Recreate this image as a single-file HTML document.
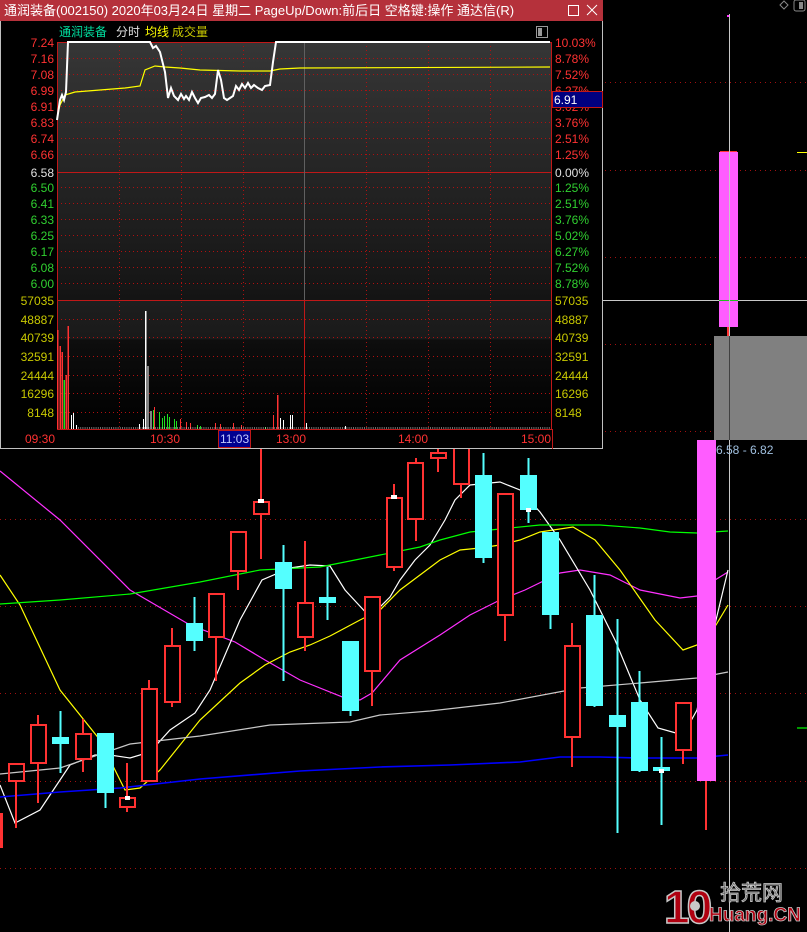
<!DOCTYPE html>
<html><head><meta charset="utf-8"><style>
html,body{margin:0;padding:0;background:#000;width:807px;height:932px;overflow:hidden}
svg{display:block}
text{font-family:"Liberation Sans","Noto Sans CJK SC",sans-serif}
</style></head><body>
<svg width="807" height="932" viewBox="0 0 807 932" xmlns="http://www.w3.org/2000/svg">
<rect width="807" height="932" fill="#000"/>
<g stroke="#a01010" stroke-width="1" stroke-dasharray="1,4">
<line x1="0" y1="82.5" x2="807" y2="82.5"/><line x1="0" y1="170.5" x2="807" y2="170.5"/>
<line x1="0" y1="257.5" x2="807" y2="257.5"/><line x1="0" y1="344.5" x2="807" y2="344.5"/>
<line x1="0" y1="431.5" x2="807" y2="431.5"/><line x1="0" y1="519.5" x2="807" y2="519.5"/>
<line x1="0" y1="606.5" x2="807" y2="606.5"/><line x1="0" y1="693.5" x2="807" y2="693.5"/>
<line x1="0" y1="781.5" x2="807" y2="781.5"/><line x1="0" y1="868.5" x2="807" y2="868.5"/>
</g>
<g fill="none" stroke-width="1.2">
<polyline stroke="#ff30ff" points="0,471 60,520 130,590 190,625 235,642 265,660 300,680 345,698 360,700 372,693 400,660 440,635 470,615 500,600 525,590 560,573 580,570 610,575 640,590 680,598 697,596 715,580 728,572"/>
<polyline stroke="#ffff00" points="0,575 20,605 60,690 100,740 125,790 140,788 160,770 200,720 240,683 265,665 290,652 310,645 330,636 360,620 380,610 400,590 420,575 440,560 460,550 480,548 500,545 520,540 540,532 573,527 595,540 620,570 655,620 683,650 697,645 716,625 728,605"/>
<polyline stroke="#ffffff" points="0,785 15,823 40,810 70,765 95,755 110,755 130,758 150,752 170,730 195,713 210,690 240,620 262,580 290,568 310,565 330,566 345,590 370,617 390,597 400,580 415,560 430,545 445,520 455,500 470,485 500,482 520,490 540,512 560,540 590,590 615,640 640,700 658,728 683,735 697,710 716,620 728,570"/>
<polyline stroke="#00ff00" points="0,604 60,600 130,594 200,582 260,570 320,567 380,555 420,547 440,540 470,532 540,525 600,525 640,528 670,532 697,533 728,531"/>
<polyline stroke="#c8c8c8" points="0,774 60,768 130,744 200,736 270,725 350,722 380,715 430,711 500,703 580,688 640,683 697,678 728,672"/>
<polyline stroke="#0000ff" stroke-width="1.6" points="0,797 60,792 120,788 200,779 300,771 380,767 450,765 520,762 560,757 600,757 640,758 697,758 728,755"/>
<line x1="797" y1="728" x2="807" y2="728" stroke="#00ff00"/>
</g>
<g stroke="#ff3232" stroke-width="2" fill="none">
<rect x="0" y="813" width="3" height="35" fill="#ff3232" stroke="none"/>
<line x1="16" y1="781" x2="16" y2="828"/><rect x="9" y="764" width="15" height="17"/>
<line x1="38" y1="715" x2="38" y2="803"/><rect x="31" y="725" width="15" height="38" fill="#000"/>
<line x1="83" y1="719" x2="83" y2="772"/><rect x="76" y="734" width="15" height="25" fill="#000"/>
<line x1="127" y1="763" x2="127" y2="812"/><rect x="120" y="798" width="15" height="9" fill="#000"/>
<line x1="149" y1="680" x2="149" y2="689"/><rect x="142" y="689" width="15" height="92" fill="#000"/>
<line x1="172" y1="628" x2="172" y2="707"/><rect x="165" y="646" width="15" height="56" fill="#000"/>
<line x1="216" y1="637" x2="216" y2="681"/><rect x="209" y="594" width="15" height="43" fill="#000"/>
<line x1="238" y1="571" x2="238" y2="590"/><rect x="231" y="532" width="15" height="39" fill="#000"/>
<line x1="261" y1="449" x2="261" y2="559"/><rect x="254" y="502" width="15" height="12" fill="#000"/>
<line x1="305" y1="541" x2="305" y2="651"/><rect x="298" y="603" width="15" height="34" fill="#000"/>
<line x1="372" y1="671" x2="372" y2="706"/><rect x="365" y="597" width="15" height="74" fill="#000"/>
<line x1="394" y1="484" x2="394" y2="571"/><rect x="387" y="498" width="15" height="69" fill="#000"/>
<line x1="416" y1="458" x2="416" y2="541"/><rect x="408" y="463" width="15" height="56" fill="#000"/>
<line x1="438" y1="448" x2="438" y2="472"/><rect x="431" y="453" width="15" height="5" fill="#000"/>
<line x1="461" y1="484" x2="461" y2="498"/><rect x="454" y="440" width="15" height="44" fill="#000"/>
<line x1="505" y1="615" x2="505" y2="641"/><rect x="498" y="494" width="15" height="121" fill="#000"/>
<line x1="572" y1="623" x2="572" y2="767"/><rect x="565" y="646" width="15" height="91" fill="#000"/>
<line x1="683" y1="750" x2="683" y2="764"/><rect x="676" y="703" width="15" height="47" fill="#000"/>
<line x1="706" y1="781" x2="706" y2="830"/>
</g>
<g fill="#54ffff">
<rect x="59.5" y="711" width="2" height="62"/><rect x="52" y="737" width="17" height="7"/>
<rect x="104.5" y="733" width="2" height="75"/><rect x="97" y="733" width="17" height="60"/>
<rect x="193.5" y="597" width="2" height="54"/><rect x="186" y="623" width="17" height="18"/>
<rect x="282.5" y="545" width="2" height="136"/><rect x="275" y="562" width="17" height="27"/>
<rect x="326.5" y="567" width="2" height="53"/><rect x="319" y="597" width="17" height="6"/>
<rect x="349.5" y="641" width="2" height="75"/><rect x="342" y="641" width="17" height="70"/>
<rect x="482.5" y="453" width="2" height="110"/><rect x="475" y="475" width="17" height="83"/>
<rect x="527.5" y="458" width="2" height="65"/><rect x="520" y="475" width="17" height="35"/>
<rect x="549.5" y="532" width="2" height="97"/><rect x="542" y="532" width="17" height="83"/>
<rect x="593.5" y="575" width="2" height="132"/><rect x="586" y="615" width="17" height="91"/>
<rect x="616.5" y="619" width="2" height="214"/><rect x="609" y="715" width="17" height="12"/>
<rect x="638.5" y="671" width="2" height="101"/><rect x="631" y="702" width="17" height="69"/>
<rect x="660.5" y="737" width="2" height="88"/><rect x="653" y="767" width="17" height="4"/>
</g>
<g fill="#fff">
<rect x="125" y="796" width="5" height="4"/><rect x="258" y="499" width="6" height="4"/>
<rect x="391" y="495" width="6" height="4"/><rect x="526" y="508" width="5" height="4"/>
<rect x="659" y="769" width="5" height="4"/>
</g>
<rect x="697" y="440" width="19" height="341" fill="#ff5cff"/>
<rect x="714" y="336" width="93" height="104" fill="#808080"/>
<rect x="719" y="152" width="19" height="175" fill="#ff5cff"/>
<line x1="720" y1="151.5" x2="737" y2="151.5" stroke="#ff3232"/>
<rect x="727" y="327" width="2" height="9" fill="#ff3232"/>
<rect x="727" y="15" width="2" height="2" fill="#ff30ff"/>
<line x1="797" y1="152.5" x2="807" y2="152.5" stroke="#ffff00"/>
<line x1="603" y1="300.5" x2="807" y2="300.5" stroke="#c8c8c8"/>
<line x1="719" y1="300.5" x2="738" y2="300.5" stroke="#20c020"/>
<line x1="729.5" y1="14" x2="729.5" y2="932" stroke="#c8c8c8"/>
<line x1="729.5" y1="336" x2="729.5" y2="440" stroke="#404040"/>
<text x="716" y="454" fill="#a0c0e0" font-size="12">6.58 - 6.82</text>
<path d="M780 5 l4 -4 l4 4 l-4 4z" fill="none" stroke="#888"/>
<rect x="794" y="0" width="11" height="11" rx="2" fill="none" stroke="#888"/><rect x="799" y="2" width="4" height="7" fill="#888"/>
<!-- logo -->
<text x="664" y="923" font-size="46" font-weight="bold" fill="#b00010" stroke="#c8c8c8" stroke-width="1.5" letter-spacing="-3">10</text>
<circle cx="695" cy="906" r="5" fill="#c8c8c8"/>
<text x="720" y="900" font-size="21" fill="#606060" stroke="#c8c8c8" stroke-width="0.8">拾荒网</text>
<text x="709" y="921" font-size="19" font-weight="bold" fill="#b00010" stroke="#c8c8c8" stroke-width="0.8">Huang.CN</text>

<!-- popup -->
<rect x="0" y="0" width="603" height="449" fill="#000"/>
<rect x="0.5" y="0.5" width="602" height="448" fill="none" stroke="#c0c0c0"/>
<rect x="0" y="0" width="603" height="21" fill="#b5313b"/>
<text x="4" y="15" fill="#fff" font-size="13">通润装备(002150) 2020年03月24日 星期二 PageUp/Down:前后日 空格键:操作 通达信(R)</text>
<rect x="568.5" y="5.5" width="10" height="10" fill="none" stroke="#fff"/>
<path d="M587 5 l10 10 M597 5 l-10 10" stroke="#fff"/>
<defs><linearGradient id="pg" x1="0" y1="0" x2="0" y2="1"><stop offset="0" stop-color="#363636"/><stop offset="1" stop-color="#141414"/></linearGradient>
<linearGradient id="vg" x1="0" y1="0" x2="0" y2="1"><stop offset="0" stop-color="#1e1e1e"/><stop offset="0.3" stop-color="#1a1a1a"/><stop offset="0.31" stop-color="#0e0e0e"/><stop offset="1" stop-color="#000"/></linearGradient></defs>
<rect x="57" y="42" width="495" height="258" fill="url(#pg)"/>
<rect x="57" y="300" width="495" height="129" fill="url(#vg)"/>
<g stroke="#b01010" stroke-dasharray="1,3">
<line x1="57" y1="58.5" x2="552" y2="58.5"/><line x1="57" y1="74.5" x2="552" y2="74.5"/><line x1="57" y1="90.5" x2="552" y2="90.5"/>
<line x1="57" y1="106.5" x2="552" y2="106.5"/><line x1="57" y1="122.5" x2="552" y2="122.5"/><line x1="57" y1="138.5" x2="552" y2="138.5"/>
<line x1="57" y1="154.5" x2="552" y2="154.5"/><line x1="57" y1="187.5" x2="552" y2="187.5"/><line x1="57" y1="203.5" x2="552" y2="203.5"/>
<line x1="57" y1="219.5" x2="552" y2="219.5"/><line x1="57" y1="235.5" x2="552" y2="235.5"/><line x1="57" y1="251.5" x2="552" y2="251.5"/>
<line x1="57" y1="267.5" x2="552" y2="267.5"/><line x1="57" y1="283.5" x2="552" y2="283.5"/>
<line x1="57" y1="319.5" x2="552" y2="319.5"/><line x1="57" y1="337.5" x2="552" y2="337.5"/><line x1="57" y1="356.5" x2="552" y2="356.5"/>
<line x1="57" y1="375.5" x2="552" y2="375.5"/><line x1="57" y1="393.5" x2="552" y2="393.5"/><line x1="57" y1="412.5" x2="552" y2="412.5"/>
<line x1="119.5" y1="42" x2="119.5" y2="429"/><line x1="181.5" y1="42" x2="181.5" y2="429"/><line x1="243.5" y1="42" x2="243.5" y2="429"/>
<line x1="366.5" y1="42" x2="366.5" y2="429"/><line x1="428.5" y1="42" x2="428.5" y2="429"/><line x1="490.5" y1="42" x2="490.5" y2="429"/>
</g>
<g stroke="#c01818" fill="none">
<rect x="57.5" y="42.5" width="494" height="387"/>
<line x1="57" y1="172.5" x2="552" y2="172.5"/><line x1="57" y1="300.5" x2="552" y2="300.5"/>
<line x1="304.5" y1="42" x2="304.5" y2="429"/>
<line x1="552.5" y1="429" x2="552.5" y2="449"/>
</g>
<line x1="304.5" y1="42" x2="304.5" y2="300" stroke="#606060"/>
<polyline fill="none" stroke="#ffff00" stroke-width="1.2" points="57,118 60,105 65,95 75,92 100,90 125,88 140,86 145,70 155,66 165,67 180,68 200,70 240,71 270,71 280,69 300,68 550,67"/>
<polyline fill="none" stroke="#fff" stroke-width="2" points="57,120 60,100 62,95 64,100 66,92 68,42 150,42 153,48 156,46 160,52 165,72 168,98 171,88 174,96 178,100 181,94 184,99 186,96 189,100 192,92 195,98 198,103 201,98 205,97 209,95 212,98 215,94 218,70 221,80 224,98 227,100 230,98 233,96 236,86 239,90 242,84 245,88 248,83 251,88 254,85 258,88 262,90 265,86 270,85 273,62 276,42 550,42"/>
<g fill="#ff3232">
<rect x="57" y="330" width="1.5" height="99"/><rect x="59.5" y="346" width="1.5" height="83"/><rect x="61.5" y="352" width="1.5" height="77"/>
<rect x="65.5" y="375" width="1.5" height="54"/><rect x="67.5" y="326" width="1.5" height="103"/><rect x="154" y="407" width="1" height="22"/>
<rect x="180" y="419" width="1" height="10"/><rect x="186" y="422" width="1" height="7"/><rect x="190" y="423" width="1" height="6"/>
<rect x="215" y="423" width="1" height="6"/><rect x="220" y="424" width="1" height="5"/><rect x="233" y="423" width="1" height="6"/>
<rect x="241" y="425" width="1" height="4"/><rect x="273" y="415" width="1" height="14"/><rect x="277" y="395" width="1.5" height="34"/>
</g>
<g fill="#20e020">
<rect x="63.5" y="380" width="1.5" height="49"/><rect x="153" y="410" width="1" height="19"/><rect x="159" y="412" width="1" height="17"/>
<rect x="162" y="418" width="1" height="11"/><rect x="164" y="416" width="1" height="13"/><rect x="167" y="414" width="1" height="15"/>
<rect x="169" y="417" width="1" height="12"/><rect x="174" y="419" width="1" height="10"/><rect x="176" y="421" width="1" height="8"/>
<rect x="197" y="425" width="1" height="4"/><rect x="200" y="426" width="1" height="3"/><rect x="265" y="427" width="1" height="2"/>
</g>
<g fill="#fff">
<rect x="71" y="415" width="1" height="14"/><rect x="73" y="413" width="1" height="16"/><rect x="76" y="425" width="1" height="4"/>
<rect x="145" y="311" width="1.5" height="118"/><rect x="147.5" y="366" width="1" height="63"/><rect x="150.5" y="411" width="1" height="18"/>
<rect x="143" y="419" width="1" height="10"/><rect x="139" y="424" width="1" height="5"/><rect x="280" y="418" width="1" height="11"/>
<rect x="283" y="420" width="1" height="9"/><rect x="290" y="415" width="1" height="14"/><rect x="292" y="415" width="1" height="14"/>
<rect x="306" y="423" width="1" height="6"/><rect x="345" y="426" width="1" height="3"/>
</g>
<g stroke="#ddd" stroke-dasharray="1,1.2"><line x1="78" y1="428" x2="550" y2="428"/></g>
<g font-size="12" text-anchor="end">
<g fill="#ff3232"><text x="54" y="47">7.24</text><text x="54" y="63">7.16</text><text x="54" y="79">7.08</text><text x="54" y="95">6.99</text><text x="54" y="111">6.91</text><text x="54" y="127">6.83</text><text x="54" y="143">6.74</text><text x="54" y="159">6.66</text></g>
<text x="54" y="177" fill="#e0e0e0">6.58</text>
<g fill="#30d030"><text x="54" y="192">6.50</text><text x="54" y="208">6.41</text><text x="54" y="224">6.33</text><text x="54" y="240">6.25</text><text x="54" y="256">6.17</text><text x="54" y="272">6.08</text><text x="54" y="288">6.00</text></g>
<g fill="#c8c800"><text x="54" y="305">57035</text><text x="54" y="324">48887</text><text x="54" y="342">40739</text><text x="54" y="361">32591</text><text x="54" y="380">24444</text><text x="54" y="398">16296</text><text x="54" y="417">8148</text></g>
</g>
<g font-size="12">
<g fill="#ff3232"><text x="555" y="47">10.03%</text><text x="555" y="63">8.78%</text><text x="555" y="79">7.52%</text><text x="555" y="95">6.27%</text><text x="555" y="111">5.02%</text><text x="555" y="127">3.76%</text><text x="555" y="143">2.51%</text><text x="555" y="159">1.25%</text></g>
<text x="555" y="177" fill="#e0e0e0">0.00%</text>
<g fill="#30d030"><text x="555" y="192">1.25%</text><text x="555" y="208">2.51%</text><text x="555" y="224">3.76%</text><text x="555" y="240">5.02%</text><text x="555" y="256">6.27%</text><text x="555" y="272">7.52%</text><text x="555" y="288">8.78%</text></g>
<g fill="#c8c800"><text x="555" y="305">57035</text><text x="555" y="324">48887</text><text x="555" y="342">40739</text><text x="555" y="361">32591</text><text x="555" y="380">24444</text><text x="555" y="398">16296</text><text x="555" y="417">8148</text></g>
<rect x="552.5" y="91.5" width="50" height="16" fill="#000080" stroke="#c01818"/>
<text x="554" y="104" fill="#fff">6.91</text>
<g fill="#ff3232"><text x="25" y="443">09:30</text><text x="150" y="443">10:30</text><text x="276" y="443">13:00</text><text x="398" y="443">14:00</text><text x="521" y="443">15:00</text></g>
<rect x="218.5" y="430.5" width="32" height="17" fill="#000090" stroke="#c01818"/>
<text x="220" y="443" fill="#c0c8ff">11:03</text>
<text x="59" y="36" fill="#00e0a0">通润装备</text><text x="116" y="36" fill="#e0e0e0">分时</text>
<text x="145" y="36" fill="#ffff00">均线</text><text x="172" y="36" fill="#c8c800">成交量</text>
</g>
<rect x="536.5" y="26.5" width="11" height="11" fill="none" stroke="#999"/><rect x="538" y="28" width="4" height="8" fill="#999"/>
</svg>
</body></html>
